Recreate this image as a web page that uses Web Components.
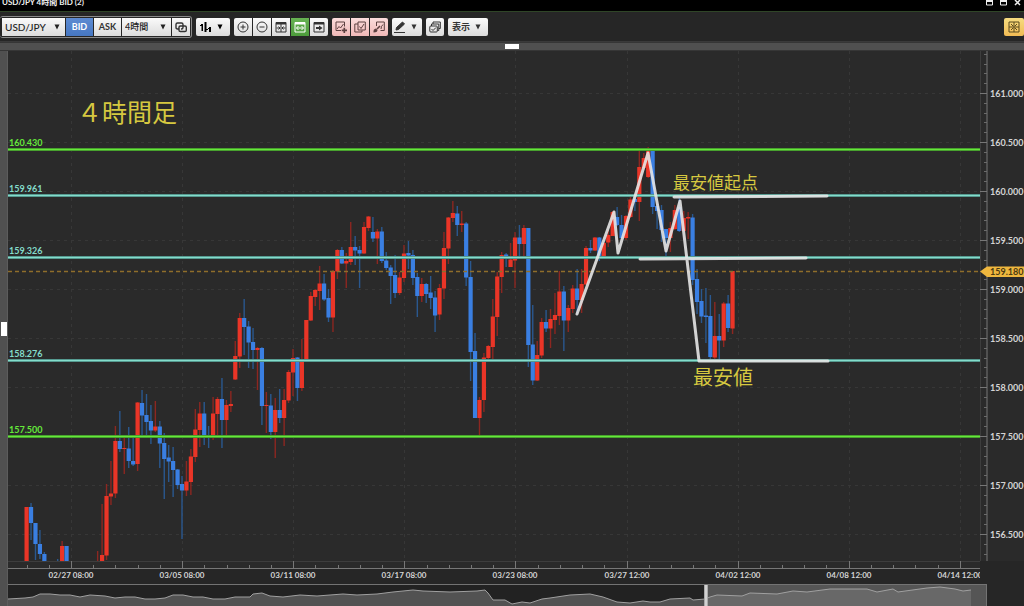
<!DOCTYPE html>
<html lang="ja">
<head>
<meta charset="utf-8">
<title>USD/JPY 4時間 BID (2)</title>
<style>
    html, body {
        height: 100%;
        margin: 0;
        background: #262626;
        font-family: Lato, "Noto Sans CJK JP", sans-serif;
    }
    body { overflow: hidden; }
</style>
</head>
<body>
<chart-window>
    <title-bar slot="title">USD/JPY 4時間 BID (2)</title-bar>
    <tool-bar slot="tools">
        <tool-group framed>
            <tool-select name="通貨ペア" options="USD/JPY,EUR/JPY" wide></tool-select>
            <tool-button class="w27" tone="blue">BID</tool-button>
            <tool-button class="w27">ASK</tool-button>
            <tool-select name="足種" options="4時間,1時間"></tool-select>
            <tool-button icon="link" label="連動"></tool-button>
        </tool-group>
        <tool-group><tool-button icon="bars" label="チャート種類" menu></tool-button></tool-group>
        <tool-group>
            <tool-button icon="plus" label="拡大"></tool-button>
            <tool-button icon="minus" label="縮小"></tool-button>
            <tool-button icon="fit" label="幅を縮める"></tool-button>
            <tool-button icon="spread" label="幅を広げる" tone="green"></tool-button>
            <tool-button icon="latest" label="最新へ"></tool-button>
        </tool-group>
        <tool-group>
            <tool-button icon="addChart" label="追加" tone="pink"></tool-button>
            <tool-button icon="copyChart" label="複製" tone="pink"></tool-button>
            <tool-button icon="brushChart" label="書式" tone="pink"></tool-button>
        </tool-group>
        <tool-group><tool-button icon="pen" label="描画" menu></tool-button></tool-group>
        <tool-group><tool-button icon="stack" label="一覧"></tool-button></tool-group>
        <tool-group><tool-button menu>表示</tool-button></tool-group>
        <tool-group slot="end"><tool-button icon="grid" label="整列" tone="gold"></tool-button></tool-group>
    </tool-bar>
    <price-plot slot="plot"></price-plot>
    <price-axis slot="prices"></price-axis>
    <time-axis slot="times"></time-axis>
    <range-overview slot="overview"></range-overview>
</chart-window>

<script>
const ICONS = {
    link: '<g stroke-width="1.400"><path d="M4 8H2.500Q1 8 1 6.500V3.500Q1 2 2.500 2H6.500Q8 2 8 3.500V5"/><rect x="4" y="5" width="7.300" height="5.500" rx="1.300"/><path d="M8 5V6.500Q8 8 6.500 8H6"/></g>',
    bars: '<path fill="currentColor" stroke="none" d="M0 4h1V3h2v7H1.500V5H0zM4.500 1h2v10h-2zM9 6h2v5H9zM6.500 8H8V9H6.500zM8 7h1v1H8z"/>',
    plus: '<circle cx="6" cy="6" r="5"/><path d="M3.500 6H8.500M6 3.500V8.500"/>',
    minus: '<circle cx="6" cy="6" r="5"/><path d="M3.500 6H8.500"/>',
    fit: '<path fill="currentColor" d="M1 1.500h10v1.500H1z"/><path d="M1 3V11H11V3M6 3V11M1.500 7H5M10.500 7H7M3.500 5.500 5 7 3.500 8.500M8.500 5.500 7 7 8.500 8.500"/>',
    spread: '<path fill="currentColor" d="M1 1.500h10v1.500H1z"/><path d="M1 3V11H11V3M2.500 7H9.500M4.500 5 2.500 7 4.500 9M7.500 5 9.500 7 7.500 9"/>',
    latest: '<path fill="currentColor" d="M1 1.500h10v1.500H1z"/><path d="M1 3V11H11V3"/><path fill="currentColor" stroke="none" d="M3 6h3V4.500L9.500 7 6 9.500V8H3z"/>',
    addChart: '<path d="M6 9.500H1V1H9.500V5.500M2 8 4 5.500 5.500 7 8.500 3"/><path stroke-width="1.700" d="M9.300 6.700V12M6.700 9.300H12"/>',
    copyChart: '<path d="M4 3H.800V11H8V9.500"/><path d="M4 1H11.300V9H4zM5.500 5.500 7 7.500 10 3"/>',
    brushChart: '<path d="M3.500 5V1H11.300V9.500H7.500M8 8 8.500 5.500 10 3.500"/><path stroke-width="1.600" d="M7 5 4 8"/><path fill="currentColor" stroke="none" d="M.500 11.500Q0 8 3 7.500L4.500 9Q4.500 11.500.500 11.500z"/>',
    pen: '<path d="M0 11.500H11"/><path fill="currentColor" d="M2 9 2.500 6.500 8.500 1 10.500 3 4.500 8.500z"/>',
    stack: '<path d="M4 3V1H11.300V7.500H9.800"/><path d="M2.500 5V3H9.800V9.500H8.500"/><rect x=".800" y="5" width="7.500" height="6" rx="1"/><path d="M2.500 8 4 9.500 7 6.500"/>',
    grid: '<path d="M1 1H11V11H1zM6 1V11M1 6H11M3 3 5 5M9 3 7 5M3 9 5 7M9 9 7 7"/>',
    down: '<path fill="currentColor" stroke="none" d="M3.500 3.500h5L6 8.500z"/>'
};
const icon = (name) => `<svg viewBox="0 0 12 12" width="12" height="12" fill="none" stroke="currentColor" aria-hidden="true">${ICONS[name]}</svg>`;

// shared scales: window coordinates, shifted by the plot origin when drawn
const LEFT = 8;
const TOP = 51;
const PLOT_HEIGHT = 510;
const priceY = (price) => 93 + (161 - price) * 98 - TOP;
const TIMES = ['02/27 08:00', '03/05 08:00', '03/11 08:00', '03/17 08:00', '03/23 08:00', '03/27 12:00', '04/02 12:00', '04/08 12:00', '04/14 12:00'];
const timeX = (i) => Math.round(71 + i * 111.1) - LEFT;

class BaseElement extends HTMLElement {
    constructor() {
        super();
        this.attachShadow({ mode: 'open' });
    }
    connectedCallback() {
        const template = document.createElement('template');
        template.innerHTML = `<style>${this.getStyles()}</style>${this.getTemplate()}`;
        this.shadowRoot.replaceChildren(template.content.cloneNode(true));
    }
}

class ChartWindow extends BaseElement {
    getStyles() {
        return `
            :host { display: flex; flex-direction: column; height: 100vh; }
            .splitter { display: grid; place-items: center; background: #505050; }
            .splitter.top { height: 7px; border: solid #363636; border-width: 1px 0; }
            .splitter.top i { width: 14px; height: 5px; }
            .splitter.side { grid-row: 1 / 4; border-right: 1px solid #5c5c5c; }
            .splitter.side i { width: 6px; height: 14px; }
            i { background: #fff; }
            main {
                flex: 1;
                min-height: 0;
                display: grid;
                grid-template-columns: 8px minmax(0, 1fr) 44px;
                grid-template-rows: minmax(0, 1fr) 23px 22px;
                background: #262626;
            }
            .overview { grid-column: 2 / 4; padding-right: 37px; }
        `;
    }
    getTemplate() {
        return `
            <slot name="title"></slot>
            <slot name="tools"></slot>
            <div class="splitter top"><i></i></div>
            <main>
                <div class="splitter side"><i></i></div>
                <slot name="plot"></slot>
                <slot name="prices"></slot>
                <slot name="times"></slot>
                <div></div>
                <div class="overview"><slot name="overview"></slot></div>
            </main>
        `;
    }
}

class TitleBar extends BaseElement {
    getStyles() {
        return `
            :host {
                display: flex;
                justify-content: space-between;
                height: 11px;
                padding: 0 2px;
                background: #000;
                border-bottom: 1px solid #2f4527;
                color: #f2f2f2;
                font-size: 8px;
                font-weight: 700;
                line-height: 4px;
            }
            nav { display: flex; gap: 5px; }
            button { all: unset; width: 9px; height: 6px; display: flex; }
        `;
    }
    getTemplate() {
        const box = '<svg width="9" height="6"><path d="M1.500 0V5H7.500V0" fill="none" stroke="#eee"/><path d="M1 0H8V2H1z" fill="#eee"/></svg>';
        return `
            <span><slot></slot></span>
            <nav>
                <button aria-label="最小化">${box}</button>
                <button aria-label="最大化">${box}</button>
                <button aria-label="閉じる"><svg width="9" height="6"><path d="M2 5 7 0M7 5 2 0" stroke="#eee" stroke-width="1.500"/></svg></button>
            </nav>
        `;
    }
}

class ToolBar extends BaseElement {
    getStyles() {
        return `
            :host {
                display: flex;
                align-items: center;
                justify-content: space-between;
                height: 29px;
                background: #262626;
                border-bottom: 1px solid #3a3a3a;
            }
            div { display: flex; align-items: center; gap: 4px; }
        `;
    }
    getTemplate() {
        return `<div><slot></slot></div><slot name="end"></slot>`;
    }
}

class ToolGroup extends BaseElement {
    getStyles() {
        return `
            :host { display: flex; gap: 1px; border-radius: 2px; overflow: hidden; }
            :host([framed]) { border: 1px solid #8a8a8a; border-left: 0; border-radius: 3px; padding: 1px 1px 1px 2px; }
        `;
    }
    getTemplate() {
        return `<slot></slot>`;
    }
}

class ToolButton extends BaseElement {
    getStyles() {
        return `
            :host { display: flex; height: 18px; min-width: 18px; color: #333; --from: #fafafa; --to: #dcdcdc; }
            :host(.w27) { min-width: 27px; }
            :host([tone=blue]) { --from: #5d8bd2; --to: #4677c2; color: #fff; }
            :host([tone=green]) { --from: #67b253; --to: #4c9b3b; color: #fff; }
            :host([tone=pink]) { --from: #fadcdb; --to: #f1b9b8; color: #5d4141; }
            :host([tone=gold]) { --from: #f6dc80; --to: #f2bb54; color: #5b4b1e; min-width: 20px; }
            :host([menu]) { min-width: 30px; }
            :host([icon=bars]) { min-width: 34px; color: #000; }
            button {
                flex: 1;
                display: flex;
                align-items: center;
                justify-content: center;
                gap: 2px;
                margin: 0;
                padding: 0 2px;
                border: 0;
                background: linear-gradient(var(--from), var(--to));
                color: inherit;
                font: 700 9px/18px Lato, "Noto Sans CJK JP", sans-serif;
            }
            :host([menu]:not([icon])) button { padding: 0 4px; }
        `;
    }
    getTemplate() {
        const name = this.getAttribute('icon');
        const label = this.getAttribute('label');
        return `
            <button type="button"${label ? ` aria-label="${label}"` : ''}>
                ${name ? icon(name) : '<slot></slot>'}
                ${this.hasAttribute('menu') ? icon('down') : ''}
            </button>
        `;
    }
}

class ToolSelect extends BaseElement {
    getStyles() {
        return `
            :host { display: grid; width: 49px; height: 18px; color: #222; background: linear-gradient(#fafafa, #dcdcdc); }
            :host([wide]) { width: 63px; }
            select, svg { grid-area: 1 / 1; }
            select {
                appearance: none;
                width: 100%;
                margin: 0;
                padding: 0 3px;
                border: 0;
                background: none;
                color: inherit;
                font: 500 9px/18px Lato, "Noto Sans CJK JP", sans-serif;
            }
            :host([wide]) select { font-size: 10px; }
            svg { align-self: center; justify-self: end; margin-right: 2px; pointer-events: none; }
        `;
    }
    getTemplate() {
        const options = this.getAttribute('options').split(',').map((o) => `<option>${o}</option>`).join('');
        return `<select aria-label="${this.getAttribute('name')}">${options}</select>${icon('down')}`;
    }
}

// slot, direction (1 up, 0 down), body top, body bottom, high, low
const CANDLES = `
0 1 507 562 507 562|1 0 507 523 503 540|2 0 523 544 523 560|3 0 544 554 530 559|4 0 554 562 552 562|7 0 561 562 559 562
8 1 546 562 541 562|9 0 546 562 546 562|16 1 561 562 551 562|17 1 555 562 504 562|18 1 496 555.500 484 560|19 1 493.500 496.500 461 505
20 1 441 493.500 426 498|21 0 441 449 411 452|22 1 448 449 438 474|23 0 448.500 461 427 468|24 0 461 464.500 437 466|25 1 402.500 464 402 471
26 0 403 415.500 390 435|27 0 415 422 394 437|28 0 421 430.500 405 444|29 1 426.500 430.500 401 432|30 0 426.500 443.500 421 468
31 0 443 459 433 499|32 0 457.500 461.500 445 482|33 0 461 470 447 497|34 0 469.500 485 469 489|35 0 484 490.500 476 539
36 1 481.500 490.500 461 496|37 1 456.500 482 449 495|38 1 429.500 457 409 462|39 1 413.500 430 402 447|40 0 413.500 436 402 445
41 0 435.500 436.500 426 448|42 1 413.500 436 397 440|43 1 399 414 397 436|44 0 399 420 378 448|45 1 405 420 400 437|46 1 404 406 391 412
47 1 356 379.500 341 380|48 1 318 356.500 313 368|49 0 318 327 299 355|50 0 326.500 342.500 321 368|51 0 342 350 328 369|52 1 348 350 347 390
53 0 348 406 347 425|54 1 405 406 392 433|55 0 405.500 432 394 439|56 1 410 432 398 458|57 0 410 418 389 423|58 1 400 418 389 446
59 1 372 400.500 370 403|60 1 358 372.500 349 396|61 0 357.500 388 357 401|62 1 359.500 388 339 391|63 1 320 359.500 320 362
64 1 296 320.500 292 321|65 1 290 297 289 306|66 1 283.500 291 266 310|67 0 283.500 299.500 274 301|68 0 298 317.500 289 322
69 1 271 317.500 270 332|70 1 250 271.500 249 279|71 0 250 263.500 247 264|72 1 261 263.500 253 288|73 1 247 262 222 265|74 0 247 250.500 236 265
75 0 250 253.500 246 288|76 1 227 253.500 222 254|77 1 216.500 228 216 231|78 0 232 238.500 217 242|79 1 231.500 238.500 229 264
80 0 231.500 261 227 263|81 0 260.500 268 252 270|82 0 267.500 276 265 304|83 0 275 293 255 298|84 1 277.500 293 272 295|85 1 253.500 278 245 282
86 0 253 255.500 241 269|87 0 255 278 250 285|88 0 277 296 273 317|89 1 284 296 278 302|90 0 284 294 283 303|91 0 292.500 298 276 309
92 0 297.500 315.500 291 332|93 1 288 314.500 284 320|94 1 248 288.500 232 299|95 1 217.500 248.500 217 264|96 1 213 218 201 222
97 0 213.500 225 206 236|98 1 223.500 225 211 232|99 0 223.500 277.500 222 286|100 0 277 352 261 381|101 0 351 418 333 418
102 1 400 418 397 435|103 1 357.500 400 353 412|104 1 346 358 345 359|105 1 316.500 347 299 360|106 1 276.500 317 272 336|107 1 255 277 252 293
108 0 254.500 259 253 267|109 1 259.500 267 243 267|110 1 237.500 260.500 232 288|111 0 237.500 244 225 256|112 1 228 244 225 257
113 0 228 345 228 367|114 0 344.500 380.500 305 385|115 1 355 380.500 341 381|116 1 322 355.500 318 358|117 0 322 328.500 310 332
118 1 319 328.500 309 348|119 1 315 320 293 334|120 1 291.500 316 271 325|121 0 291.500 320.500 286 351|122 1 308 320.500 305 332
123 1 288.500 309 285 313|124 0 288.500 300 269 314|125 1 284 300 269 313|126 1 248 284.500 246 285|127 0 248 250.500 240 253
128 1 237.500 250.500 237 251|129 0 237.500 259 237 261|130 1 243 259 242 259|131 1 235 242.500 230 247|132 1 212 236 211 236
133 0 217 225 207 226|134 0 225 238 215 240|135 1 216 238 215 240|136 1 199.500 217 197 218|137 0 199 202 195 211|138 1 167 202 151 221
139 1 158 168 153 170|140 1 151 177 147 178|141 0 151 207 149 214|142 0 206 211 204 229|143 0 210 230 205 242|144 0 229 238 229 257
145 1 228 238 222 252|146 1 210 229 205 230|147 0 207 231 198 232|148 1 218 231 211 232|149 1 217 218.500 212 239|150 0 217.500 280 214 285
151 0 279 302 269 314|152 0 301 316.500 289 323|153 0 315.500 317 288 343|154 0 316 357 295 360|155 1 336 357.500 302 359
156 0 336 340.500 314 359|157 1 303.500 340.500 302 347|158 0 303.500 328 295 332|159 1 271 328.500 271 334
`.trim().split(/[|\n]/).map((row) => row.trim().split(' ').map(Number));

class PricePlot extends BaseElement {
    getStyles() {
        return `
            :host { display: block; min-width: 0; min-height: 0; overflow: hidden; background: #2a2a2a; }
            svg { display: block; width: 100%; height: 100%; }
            text { font-family: Lato, "Noto Sans CJK JP", sans-serif; }
            .grid { stroke: #373737; stroke-dasharray: 3 4; }
            .level text { font-size: 9px; font-weight: 700; }
            .note { fill: #d6c840; font-family: "Noto Sans CJK JP", sans-serif; }
            .drawn { fill: none; stroke: #e6e6e6; stroke-opacity: .9; stroke-width: 3; stroke-linecap: round; stroke-linejoin: round; }
        `;
    }
    getCandles() {
        return CANDLES.map(([slot, up, top, bottom, high, low]) => {
            const x = 26.600 + slot * 4.440 - LEFT;
            const wick = up ? '#8c2721' : '#2a588f';
            const body = up ? '#ea3527' : '#3a7fe2';
            return `<rect x="${(x - .7).toFixed(2)}" y="${high - TOP}" width="1.400" height="${low - high}" fill="${wick}"/>
                <rect x="${(x - 2.1).toFixed(2)}" y="${top - TOP}" width="4.200" height="${bottom - top}" fill="${body}"/>`;
        }).join('');
    }
    getLevel(price, color, edge) {
        const y = Math.round(priceY(Number(price))) + .5;
        return `<g class="level">
            <line x2="100%" y1="${y}" y2="${y}" stroke="${edge}" stroke-width="3"/>
            <line x2="100%" y1="${y}" y2="${y}" stroke="${color}" stroke-width="1.500"/>
            <text x="1" y="${y - 4}" fill="${color}">${price}</text>
        </g>`;
    }
    getTemplate() {
        let grid = '';
        for (let p = 161; p > 156; p -= .5) {
            grid += `<line class="grid" x2="100%" y1="${priceY(p) + .5}" y2="${priceY(p) + .5}"/>`;
        }
        TIMES.forEach((t, i) => {
            grid += `<line class="grid" x1="${timeX(i) + .5}" x2="${timeX(i) + .5}" y2="${PLOT_HEIGHT}"/>`;
        });
        return `
            <svg role="img" aria-label="USD/JPY">
                ${grid}
                ${this.getCandles()}
                <line x2="100%" y1="220.500" y2="220.500" stroke="#8f6e2b" stroke-width="1.500" stroke-dasharray="4 3"/>
                ${this.getLevel('160.430', '#65e83a', '#3f8a2b')}
                ${this.getLevel('159.961', '#84dccb', '#47857c')}
                ${this.getLevel('159.326', '#84dccb', '#47857c')}
                ${this.getLevel('158.276', '#84dccb', '#47857c')}
                ${this.getLevel('157.500', '#65e83a', '#3f8a2b')}
                <g transform="translate(-${LEFT} -${TOP})">
                    <path class="drawn" d="M577 314 614 212 618 253 648 153 666 251 680 201 699 361H828M674 197 827 196M640 259 806 258"/>
                    <text class="note" x="77" y="122" font-size="25">４時間足</text>
                    <text class="note" x="673" y="189" font-size="17">最安値起点</text>
                    <text class="note" x="693" y="385" font-size="20">最安値</text>
                </g>
            </svg>
        `;
    }
}

class PriceAxis extends BaseElement {
    getStyles() {
        return `
            :host { display: block; min-height: 0; overflow: hidden; background: #2a2a2a; }
            svg { display: block; width: 100%; height: 100%; }
            text { font: 700 9px Lato, sans-serif; fill: #d4d4d4; }
            .now { fill: #4a3a12; }
        `;
    }
    getTemplate() {
        let marks = '';
        for (let i = -4; i < 48; i++) {
            const y = Math.round(42 + i * 9.800) + .5;
            if (i % 5) {
                marks += `<path d="M4 ${y}H7" stroke="#6a6a6a"/>`;
            } else {
                marks += `<path d="M0 ${y}H7" stroke="#777"/><text x="10" y="${y + 3}">${(161 - i / 10).toFixed(3)}</text>`;
            }
        }
        return `
            <svg>
                <path d="M.500 0V${PLOT_HEIGHT}" stroke="#3d3d3d"/>
                <path d="M7 0V${PLOT_HEIGHT}" stroke="#777"/>
                ${marks}
                <path d="M0 220.500 7 215.500H44V226H7z" fill="#efb73e"/>
                <text class="now" x="10" y="224">159.180</text>
            </svg>
        `;
    }
}

class TimeAxis extends BaseElement {
    getStyles() {
        return `
            :host { display: block; min-width: 0; overflow: hidden; }
            svg { display: block; width: 100%; height: 23px; }
            text { font: 700 8px Lato, sans-serif; fill: #d4d4d4; text-anchor: middle; }
        `;
    }
    getTemplate() {
        let marks = '';
        for (let i = -2; i < 42; i++) {
            const x = Math.round(63 + i * 22.220) + .5;
            marks += `<path d="M${x} ${i % 5 ? 4 : 0}V7" stroke="#777"/>`;
        }
        const labels = TIMES.map((t, i) => `<text x="${timeX(i)}" y="17">${t}</text>`).join('');
        return `
            <svg>
                <rect width="100%" height="7" fill="#2a2a2a"/>
                <line x2="100%" y1=".5" y2=".5" stroke="#3d3d3d"/>
                <line x2="100%" y1="7.500" y2="7.500" stroke="#777"/>
                ${marks}${labels}
            </svg>
        `;
    }
}

class RangeOverview extends BaseElement {
    getStyles() {
        return `
            :host { display: block; height: 100%; overflow: hidden; border: solid #737373; border-width: 1px 1px 0 0; box-sizing: border-box; }
            svg { display: block; width: 100%; height: 100%; }
        `;
    }
    getTemplate() {
        const line = '8 599 25 598 33 597 40 594 50 594 60 595 70 595 80 597 90 595 105 596 115 598 125 597 135 597 145 599 155 599 165 598 173 595 183 595 193 597 203 597 213 599 225 599 235 597 250 597 253 594 262 593 270 596 283 597 300 595 317 596 343 594 357 595 377 594 393 592 413 590 423 591 450 592 477 591 485 590 488 593 493 600 505 600 512 604 522 602 530 603 542 599 550 598 570 595 590 594 603 597 617 602 630 603 643 601 650 602 660 602 670 599 690 598 693 600 705 599 710 597 717 595 742 596 750 593 777 594 793 591 807 592 830 589 867 589 877 592 893 589 898 592 927 588 940 587 955 589 963 591 971 590';
        return `
            <svg>
                <g transform="translate(-8 -585)">
                    <rect x="8" y="585" width="697" height="40" fill="#222"/>
                    <rect x="707" y="585" width="2000" height="40" fill="#555"/>
                    <path d="M8 625L${line}V625z" fill="#525252"/>
                    <path d="M707 625V597L${line.slice(line.indexOf('710 597'))}V625z" fill="#686868"/>
                    <path d="M${line}" fill="none" stroke="#a0a0a0"/>
                    <path d="M704 585h4v40h-4z" fill="#aaa"/>
                    <path d="M705 585h2v40h-2z" fill="#d2d2d2"/>
                </g>
            </svg>
        `;
    }
}

customElements.define('chart-window', ChartWindow);
customElements.define('title-bar', TitleBar);
customElements.define('tool-bar', ToolBar);
customElements.define('tool-group', ToolGroup);
customElements.define('tool-button', ToolButton);
customElements.define('tool-select', ToolSelect);
customElements.define('price-plot', PricePlot);
customElements.define('price-axis', PriceAxis);
customElements.define('time-axis', TimeAxis);
customElements.define('range-overview', RangeOverview);
</script>
</body>
</html>
